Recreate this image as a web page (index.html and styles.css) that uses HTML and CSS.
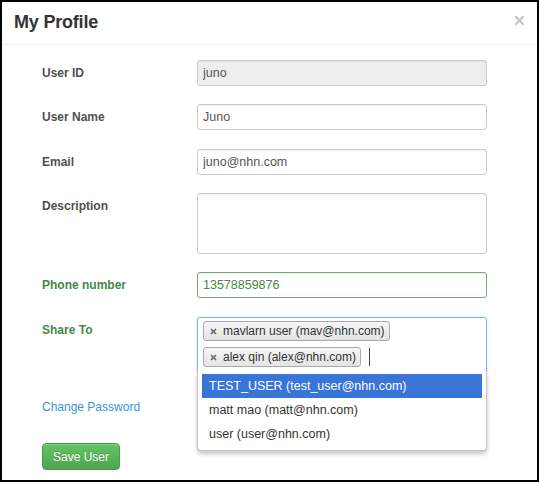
FILE: index.html
```html
<!DOCTYPE html>
<html>
<head>
<meta charset="utf-8">
<link rel="stylesheet" href="styles.css">
</head>
<body>
<div class="modal">
  <div class="modal-header">
    <h3 class="title">My Profile</h3>
    <span class="close"><svg width="9" height="9" viewBox="0 0 9 9"><path d="M1 1L8 8M8 1L1 8" stroke="#c4c4c4" stroke-width="2.2" stroke-linecap="square"/></svg></span>
  </div>
  <form class="modal-body">
    <div class="row">
      <label class="label">User ID</label>
      <input class="input readonly" value="juno" readonly>
    </div>
    <div class="row row-wide">
      <label class="label">User Name</label>
      <input class="input" value="Juno">
    </div>
    <div class="row">
      <label class="label">Email</label>
      <input class="input" value="juno@nhn.com">
    </div>
    <div class="row">
      <label class="label">Description</label>
      <textarea class="input textarea"></textarea>
    </div>
    <div class="row row-wide success">
      <label class="label">Phone number</label>
      <input class="input" value="13578859876">
    </div>
    <div class="row success share-row">
      <label class="label">Share To</label>
      <div class="share-wrap">
        <div class="share-box">
          <span class="tag"><svg class="tag-x" width="7" height="7" viewBox="0 0 7 7"><path d="M1 1L6 6M6 1L1 6" stroke="#666" stroke-width="1.7"/></svg>mavlarn user (mav@nhn.com)</span>
          <span class="tag"><svg class="tag-x" width="7" height="7" viewBox="0 0 7 7"><path d="M1 1L6 6M6 1L1 6" stroke="#666" stroke-width="1.7"/></svg>alex qin (alex@nhn.com)</span>
          <span class="caret"></span>
        </div>
        <ul class="drop">
          <li class="opt active">TEST_USER (test_user@nhn.com)</li>
          <li class="opt">matt mao (matt@nhn.com)</li>
          <li class="opt">user (user@nhn.com)</li>
        </ul>
      </div>
    </div>
    <div class="link-row">
      <a class="link" href="#">Change Password</a>
    </div>
    <div class="btn-row">
      <button type="button" class="btn">Save User</button>
    </div>
  </form>
</div>
</body>
</html>
```
FILE: styles.css
```css
* { box-sizing: border-box; }
html, body { margin: 0; padding: 0; background: #fff; }
body { font-family: "Liberation Sans", Arial, sans-serif; color: #333; }

.modal {
  width: 539px;
  height: 482px;
  border: 2px solid #000;
  background: #fff;
  overflow: hidden;
}

.modal-header {
  display: flex;
  justify-content: space-between;
  align-items: flex-start;
  padding: 8px 13px 10px 12px;
  border-bottom: 1px solid #eee;
}
.title {
  margin: 0;
  font-size: 18px;
  line-height: 24px;
  font-weight: bold;
  color: #333;
  letter-spacing: -0.2px;
}
.close { display: flex; padding-top: 6px; }

.modal-body {
  padding: 15px 0 0 40px;
  margin: 0;
}

.row {
  display: grid;
  grid-template-columns: 155px 290px;
  margin-bottom: 18px;
}
.row-wide { margin-bottom: 19px; }
.label {
  font-size: 12px;
  font-weight: bold;
  line-height: 26px;
  color: #505050;
}
.input {
  display: block;
  width: 290px;
  height: 26px;
  margin: 0;
  padding: 0 5px;
  border: 1px solid #ccc;
  border-radius: 3px;
  background: #fff;
  font-family: "Liberation Sans", Arial, sans-serif;
  font-size: 12.5px;
  color: #555;
  box-shadow: inset 0 1px 1px rgba(0,0,0,.06);
  outline: none;
}
.readonly { background: #eee; }
.textarea { height: 61px; resize: none; }

.success .label { color: #468847; }
.success .input { border-color: #6fae6f; color: #468847; }

.share-row { margin-bottom: 20px; }
.share-wrap { position: relative; width: 290px; }
.share-box {
  display: flex;
  flex-wrap: wrap;
  align-items: center;
  height: 56px;
  padding: 0 0 2px 0;
  border: 1px solid #86b4e4;
  border-radius: 3px 3px 0 0;
  box-shadow: 0 0 3px rgba(82,168,236,.35);
}
.tag {
  display: inline-flex;
  align-items: center;
  height: 20px;
  margin: 3px 0 3px 5px;
  padding: 0 4px 0 19px;
  position: relative;
  border: 1px solid #aaa;
  border-radius: 3px;
  background: linear-gradient(#f6f6f6, #e4e4e4);
  font-size: 12px;
  color: #333;
}
.tag-x { position: absolute; left: 6px; top: 6px; }
.caret {
  display: inline-block;
  width: 1px;
  height: 18px;
  margin-left: 8px;
  background: #444;
}

.drop {
  position: absolute;
  top: 55px;
  left: 0;
  width: 290px;
  margin: 0;
  padding: 2px 4px 4px;
  list-style: none;
  background: #fff;
  border: 1px solid #c4c4c4;
  border-top: none;
  border-radius: 0 0 4px 4px;
  box-shadow: 0 3px 4px rgba(0,0,0,.22);
  z-index: 2;
}
.opt {
  height: 24px;
  line-height: 24px;
  padding: 0 7px;
  font-size: 12.5px;
  color: #333;
}
.opt.active { background: #3875d7; color: #fff; }

.link-row { height: 26px; line-height: 26px; margin-bottom: 24px; }
.link { font-size: 12px; color: #3399d6; text-decoration: none; }

.btn {
  width: 78px;
  height: 27px;
  padding: 0;
  border: 1px solid #4a9a4a;
  border-radius: 4px;
  background: linear-gradient(#64c564, #4fa34f);
  color: #fff;
  font-family: "Liberation Sans", Arial, sans-serif;
  font-size: 12px;
  text-shadow: 0 -1px 0 rgba(0,0,0,.2);
  box-shadow: inset 0 1px 0 rgba(255,255,255,.2), 0 1px 2px rgba(0,0,0,.05);
}
```
